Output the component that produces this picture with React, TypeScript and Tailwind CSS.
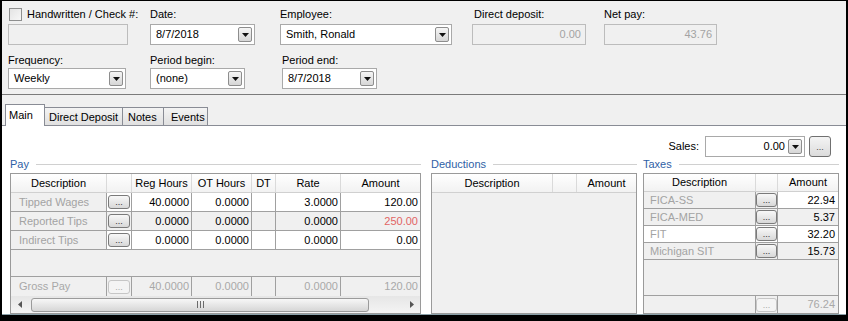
import React from 'react';

type PayRow = { desc: string; reg: string; ot: string; rate: string; amt: string; shade?: boolean; red?: boolean };
type TaxRow = { desc: string; amt: string; descShade: boolean; amtShade: boolean };

const payRows: PayRow[] = [
  { desc: 'Tipped Wages', reg: '40.0000', ot: '0.0000', rate: '3.0000', amt: '120.00' },
  { desc: 'Reported Tips', reg: '0.0000', ot: '0.0000', rate: '0.0000', amt: '250.00', shade: true, red: true },
  { desc: 'Indirect Tips', reg: '0.0000', ot: '0.0000', rate: '0.0000', amt: '0.00' },
];

const taxRows: TaxRow[] = [
  { desc: 'FICA-SS', amt: '22.94', descShade: true, amtShade: false },
  { desc: 'FICA-MED', amt: '5.37', descShade: true, amtShade: true },
  { desc: 'FIT', amt: '32.20', descShade: false, amtShade: false },
  { desc: 'Michigan SIT', amt: '15.73', descShade: true, amtShade: true },
];

function DropButton() {
  return (
    <span className="flex h-[15px] w-[14px] shrink-0 items-center justify-center rounded-[2px] border border-[#8d8d8d] bg-gradient-to-b from-[#f6f6f6] to-[#d6d6d6]">
      <svg width="7" height="4" viewBox="0 0 7 4">
        <path d="M0 0h7L3.5 4z" fill="#111" />
      </svg>
    </span>
  );
}

function Combo({ value, className = '', right }: { value: string; className?: string; right?: boolean }) {
  return (
    <div className={`flex h-[21px] items-center border border-[#a9a9a9] bg-white pr-[2px] ${className}`}>
      <span className={`flex-1 truncate ${right ? 'pr-[3px] text-right' : 'pl-[5px]'}`}>{value}</span>
      <DropButton />
    </div>
  );
}

function Disabled({ value, className = '' }: { value: string; className?: string }) {
  return (
    <div className={`h-[21px] border border-[#bcbcbc] bg-[#f0f0f0] pr-[4px] text-right leading-[19px] text-[#a3a3a3] ${className}`}>
      {value}
    </div>
  );
}

function Dots({ disabled }: { disabled?: boolean }) {
  return (
    <span
      className={`flex h-[14px] w-[22px] items-end justify-center rounded-[3px] border pb-[1px] text-[9px] leading-none ${
        disabled ? 'border-[#c6c6c6] bg-[#f4f4f4] text-[#a8a8a8]' : 'border-[#7a7a7a] bg-gradient-to-b from-[#f8f8f8] to-[#d8d8d8] text-[#333]'
      }`}
    >
      ...
    </span>
  );
}

function Label({ children, className = '' }: { children: React.ReactNode; className?: string }) {
  return <div className={`h-[14px] leading-[14px] ${className}`}>{children}</div>;
}

function GroupTitle({ title, className = '' }: { title: string; className?: string }) {
  return (
    <div className={`flex h-[14px] items-center ${className}`}>
      <span className="leading-[14px] text-[#2f5fa6]">{title}</span>
      <span className="ml-[7px] h-px flex-1 bg-[#d0d0d0]" />
    </div>
  );
}

function Head({ className = '', children }: { className?: string; children?: React.ReactNode }) {
  return <div className={`flex items-center justify-center border-r border-[#dadada] ${className}`}>{children}</div>;
}

function Grip() {
  return (
    <svg width="7" height="7" viewBox="0 0 7 7">
      <path d="M0.5 0v7M3.5 0v7M6.5 0v7" stroke="#6b6b6b" strokeWidth="1" />
    </svg>
  );
}

function PayGrid() {
  return (
    <div className="flex h-[141px] w-[411px] flex-col border border-[#9a9a9a] bg-[#f0f0f0]">
      <div className="flex h-[19px] shrink-0 border-b border-[#d0d0d0] bg-gradient-to-b from-white to-[#f2f2f2]">
        <Head className="w-[96px]">Description</Head>
        <Head className="w-[25px]" />
        <Head className="w-[60px]">Reg Hours</Head>
        <Head className="w-[60px]">OT Hours</Head>
        <Head className="w-[24px]">DT</Head>
        <Head className="w-[65px]">Rate</Head>
        <Head className="flex-1 border-r-0">Amount</Head>
      </div>
      {payRows.map((r) => {
        const bg = r.shade ? 'bg-[#f0f0f0]' : 'bg-white';
        return (
          <div key={r.desc} className="flex h-[19px] shrink-0 border-b border-[#a0a0a0]">
            <div className="w-[96px] border-r border-[#a0a0a0] bg-[#f0f0f0] pl-[8px] leading-[18px] text-[#a3a3a3]">{r.desc}</div>
            <div className={`flex w-[25px] items-center justify-center border-r border-[#a0a0a0] ${bg}`}>
              <Dots />
            </div>
            <div className={`w-[60px] border-r border-[#a0a0a0] pr-[2px] text-right leading-[18px] ${bg}`}>{r.reg}</div>
            <div className={`w-[60px] border-r border-[#a0a0a0] pr-[2px] text-right leading-[18px] ${bg}`}>{r.ot}</div>
            <div className={`w-[24px] border-r border-[#a0a0a0] ${bg}`} />
            <div className={`w-[65px] border-r border-[#a0a0a0] pr-[2px] text-right leading-[18px] ${bg}`}>{r.rate}</div>
            <div className={`flex-1 pr-[2px] text-right leading-[18px] ${bg} ${r.red ? 'text-[#e26464]' : ''}`}>{r.amt}</div>
          </div>
        );
      })}
      <div className="flex-1" />
      <div className="flex h-[20px] shrink-0 border-t border-[#a0a0a0] bg-[#f0f0f0] leading-[19px] text-[#a8a8a8]">
        <div className="w-[96px] border-r border-[#a0a0a0] pl-[8px]">Gross Pay</div>
        <div className="flex w-[25px] items-center justify-center border-r border-[#a0a0a0]">
          <Dots disabled />
        </div>
        <div className="w-[60px] border-r border-[#a0a0a0] pr-[2px] text-right">40.0000</div>
        <div className="w-[60px] border-r border-[#a0a0a0] pr-[2px] text-right">0.0000</div>
        <div className="w-[24px] border-r border-[#a0a0a0]" />
        <div className="w-[65px] border-r border-[#a0a0a0] pr-[2px] text-right">0.0000</div>
        <div className="flex-1 pr-[2px] text-right">120.00</div>
      </div>
      <div className="flex h-[17px] shrink-0 items-center bg-gradient-to-b from-[#e6e6e6] to-[#f4f4f4]">
        <div className="flex w-[17px] justify-center">
          <svg width="4" height="7" viewBox="0 0 4 7">
            <path d="M4 0v7L0 3.5z" fill="#555" />
          </svg>
        </div>
        <div className="ml-[3px] flex h-[14px] w-[338px] items-center justify-center rounded-[3px] border border-[#9b9b9b] bg-gradient-to-b from-[#f7f7f7] to-[#d6d6d6]">
          <Grip />
        </div>
        <div className="flex-1" />
        <div className="flex w-[17px] justify-center">
          <svg width="4" height="7" viewBox="0 0 4 7">
            <path d="M0 0v7L4 3.5z" fill="#555" />
          </svg>
        </div>
      </div>
    </div>
  );
}

function DeductionsGrid() {
  return (
    <div className="flex h-[141px] w-[206px] flex-col border border-[#9a9a9a] bg-[#f0f0f0]">
      <div className="flex h-[19px] shrink-0 border-b border-[#d0d0d0] bg-gradient-to-b from-white to-[#f2f2f2]">
        <Head className="w-[121px]">Description</Head>
        <Head className="w-[24px]" />
        <Head className="flex-1 border-r-0">Amount</Head>
      </div>
    </div>
  );
}

function TaxesGrid() {
  return (
    <div className="flex h-[141px] w-[196px] flex-col border border-[#9a9a9a] bg-[#f0f0f0]">
      <div className="flex h-[18px] shrink-0 border-b border-[#d0d0d0] bg-gradient-to-b from-white to-[#f2f2f2]">
        <Head className="w-[112px]">Description</Head>
        <Head className="w-[22px]" />
        <Head className="flex-1 border-r-0">Amount</Head>
      </div>
      {taxRows.map((r) => (
        <div key={r.desc} className="flex h-[17px] shrink-0 border-b border-[#a0a0a0] leading-[16px]">
          <div className={`w-[112px] border-r border-[#a0a0a0] pl-[6px] text-[#a3a3a3] ${r.descShade ? 'bg-[#f0f0f0]' : 'bg-white'}`}>{r.desc}</div>
          <div className={`flex w-[22px] items-center justify-center border-r border-[#a0a0a0] ${r.descShade ? 'bg-[#f0f0f0]' : 'bg-white'}`}>
            <Dots />
          </div>
          <div className={`flex-1 pr-[3px] text-right ${r.amtShade ? 'bg-[#f0f0f0]' : 'bg-white'}`}>{r.amt}</div>
        </div>
      ))}
      <div className="flex-1" />
      <div className="flex h-[18px] shrink-0 border-t border-[#a0a0a0] leading-[17px] text-[#a8a8a8]">
        <div className="w-[112px] border-r border-[#a0a0a0]" />
        <div className="flex w-[22px] items-center justify-center border-r border-[#a0a0a0]">
          <Dots disabled />
        </div>
        <div className="flex-1 pr-[3px] text-right">76.24</div>
      </div>
    </div>
  );
}

export default function App() {
  return (
    <div className="flex h-[321px] w-[848px] flex-col border-x-2 border-t border-b-[6px] border-black bg-[#f0f0f0] font-['Liberation_Sans',Arial,sans-serif] text-[11px] text-black">
      {/* header fields */}
      <div className="grid h-[94px] shrink-0 grid-cols-[142px_130px_192px_132px_1fr] grid-rows-[45px_43px] border-b border-[#7b7b7b] pl-[6px]">
        <div className="pt-[6px]">
          <Label className="flex items-center gap-[5px] pl-[1px]">
            <span className="h-[13px] w-[13px] border border-[#8e8f8f] bg-gradient-to-br from-[#e4e4e4] to-[#f7f7f7]" />
            Handwritten / Check #:
          </Label>
          <div className="mt-[3px] h-[21px] w-[120px] border border-[#bcbcbc] bg-[#f0f0f0]" />
        </div>
        <div className="pt-[6px]">
          <Label>Date:</Label>
          <Combo value="8/7/2018" className="mt-[3px] w-[105px]" />
        </div>
        <div className="pt-[6px]">
          <Label>Employee:</Label>
          <Combo value="Smith, Ronald" className="mt-[3px] w-[172px]" />
        </div>
        <div className="pt-[6px]">
          <Label className="pl-[2px]">Direct deposit:</Label>
          <Disabled value="0.00" className="mt-[3px] w-[114px]" />
        </div>
        <div className="pt-[6px]">
          <Label>Net pay:</Label>
          <Disabled value="43.76" className="mt-[3px] w-[113px]" />
        </div>

        <div className="pt-[7px]">
          <Label>Frequency:</Label>
          <Combo value="Weekly" className="mt-[1px] w-[118px]" />
        </div>
        <div className="pt-[7px]">
          <Label>Period begin:</Label>
          <Combo value="(none)" className="mt-[1px] w-[95px]" />
        </div>
        <div className="pl-[2px] pt-[7px]">
          <Label>Period end:</Label>
          <Combo value="8/7/2018" className="mt-[1px] w-[95px]" />
        </div>
      </div>

      {/* tabs */}
      <div className="flex h-[31px] shrink-0 items-end border-b border-[#898c95] pl-[3px]">
        <div className="relative -mb-px h-[22px] w-[40px] border border-b-0 border-[#898c95] bg-white pl-[3px] pt-[3px] leading-[14px]">Main</div>
        <div className="h-[18px] w-[78px] border-r border-t border-[#898c95] bg-gradient-to-b from-[#f4f4f4] to-[#e0e0e0] pl-[4px] pt-[2px] leading-[14px]">Direct Deposit</div>
        <div className="h-[18px] w-[41px] border-r border-t border-[#898c95] bg-gradient-to-b from-[#f4f4f4] to-[#e0e0e0] pl-[5px] pt-[2px] leading-[14px]">Notes</div>
        <div className="h-[18px] w-[44px] border-r border-t border-[#898c95] bg-gradient-to-b from-[#f4f4f4] to-[#e0e0e0] pl-[7px] pt-[2px] leading-[14px]">Events</div>
      </div>

      {/* tab page */}
      <div className="flex flex-1 flex-col border-b border-[#8aa0a8] bg-white pt-[10px]">
        <div className="flex h-[21px] shrink-0 items-center justify-end pr-[15px]">
          <span className="mr-[6px]">Sales:</span>
          <Combo value="0.00" right className="w-[100px]" />
          <span className="ml-[4px] flex h-[21px] w-[22px] items-end justify-center rounded-[3px] border border-[#707070] bg-gradient-to-b from-[#f4f4f4] to-[#dcdcdc] pb-[4px] text-[9px] leading-none text-[#444]">
            ...
          </span>
        </div>
        <div className="flex pl-[8px]">
          <div className="w-[411px]">
            <GroupTitle title="Pay" />
            <div className="mt-[2px]">
              <PayGrid />
            </div>
          </div>
          <div className="ml-[10px] w-[206px]">
            <GroupTitle title="Deductions" />
            <div className="mt-[2px]">
              <DeductionsGrid />
            </div>
          </div>
          <div className="ml-[6px] w-[196px]">
            <GroupTitle title="Taxes" />
            <div className="mt-[2px]">
              <TaxesGrid />
            </div>
          </div>
        </div>
      </div>
    </div>
  );
}
